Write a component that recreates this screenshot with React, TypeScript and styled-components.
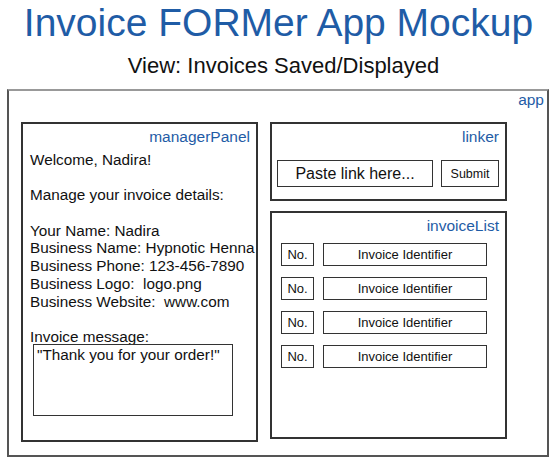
import React from 'react';
import styled, { createGlobalStyle } from 'styled-components';

const blue = '#1f5ca6';
const ink = '#333';

const GlobalStyle = createGlobalStyle`
  body {
    margin: 0;
    background: #fff;
    font-family: 'Liberation Sans', Arial, sans-serif;
    color: #111;
  }
`;

const Page = styled.div`
  width: 557px;
`;

const Title = styled.h1`
  margin: 0;
  font-size: 39px;
  line-height: 45px;
  font-weight: 400;
  color: ${blue};
  text-align: center;
`;

const Subtitle = styled.h2`
  margin: 8px 0 0;
  padding-left: 10px;
  font-size: 22px;
  line-height: 25px;
  font-weight: 400;
  text-align: center;
`;

const AppFrame = styled.div`
  box-sizing: border-box;
  width: 542px;
  height: 368px;
  margin: 11px 0 0 7px;
  padding: 0 3px 13px 12px;
  border: 2px solid #555;
  border-top-color: #999;
  display: grid;
  grid-template-columns: 237px 237px 1fr;
  grid-template-rows: 31px 1fr;
  column-gap: 12px;
`;

const FrameLabel = styled.div`
  grid-column: 1 / -1;
  justify-self: end;
  color: ${blue};
  font-size: 15.5px;
  line-height: 18px;
`;

const Panel = styled.section<{ $height: number }>`
  box-sizing: border-box;
  height: ${({ $height }) => $height}px;
  border: 2px solid ${ink};
  padding: 4px 6px 0 7px;
  display: flex;
  flex-direction: column;
`;

const PanelLabel = styled.div`
  text-align: right;
  color: ${blue};
  font-size: 15.5px;
  line-height: 18px;
`;

const Column = styled.div`
  display: flex;
  flex-direction: column;
  gap: 10px;
`;

const Details = styled.div`
  margin-top: 5px;
  font-size: 15.3px;
  line-height: 17.7px;
`;

const Para = styled.p`
  margin: 0 0 17.7px;
  white-space: pre;
`;

const MessageBox = styled.div`
  box-sizing: border-box;
  width: 200px;
  height: 72px;
  margin: -2px 0 0 3px;
  padding: 0 3px;
  border: 1.5px solid ${ink};
  font-size: 15.3px;
  line-height: 20px;
`;

const LinkRow = styled.div`
  display: flex;
  gap: 8px;
  margin: 14px 0 0 -2px;
`;

const Field = styled.div<{ $w: number; $size: number }>`
  box-sizing: border-box;
  width: ${({ $w }) => $w}px;
  height: 27px;
  border: 1.5px solid ${ink};
  display: flex;
  align-items: center;
  justify-content: center;
  font-size: ${({ $size }) => $size}px;
`;

const List = styled.div`
  display: flex;
  flex-direction: column;
  gap: 11px;
  margin-top: 8px;
  padding-left: 2px;
`;

const Row = styled.div`
  display: flex;
  gap: 9px;
`;

const Cell = styled.div<{ $w: number }>`
  box-sizing: border-box;
  width: ${({ $w }) => $w}px;
  height: 23px;
  border: 1.5px solid ${ink};
  display: flex;
  align-items: center;
  justify-content: center;
  font-size: 13px;
`;

const details = [
  'Welcome, Nadira!',
  'Manage your invoice details:',
  'Your Name: Nadira\nBusiness Name: Hypnotic Henna\nBusiness Phone: 123-456-7890\nBusiness Logo:  logo.png\nBusiness Website:  www.com',
];

export default function App() {
  return (
    <Page>
      <GlobalStyle />
      <Title>Invoice FORMer App Mockup</Title>
      <Subtitle>View: Invoices Saved/Displayed</Subtitle>
      <AppFrame>
        <FrameLabel>app</FrameLabel>
        <Panel $height={320}>
          <PanelLabel>managerPanel</PanelLabel>
          <Details>
            {details.map((d) => (
              <Para key={d}>{d}</Para>
            ))}
            <div>Invoice message:</div>
          </Details>
          <MessageBox>"Thank you for your order!"</MessageBox>
        </Panel>
        <Column>
          <Panel $height={79}>
            <PanelLabel>linker</PanelLabel>
            <LinkRow>
              <Field $w={156} $size={16}>Paste link here...</Field>
              <Field $w={58} $size={12.5}>Submit</Field>
            </LinkRow>
          </Panel>
          <Panel $height={228}>
            <PanelLabel>invoiceList</PanelLabel>
            <List>
              {[0, 1, 2, 3].map((i) => (
                <Row key={i}>
                  <Cell $w={33}>No.</Cell>
                  <Cell $w={164}>Invoice Identifier</Cell>
                </Row>
              ))}
            </List>
          </Panel>
        </Column>
      </AppFrame>
    </Page>
  );
}
